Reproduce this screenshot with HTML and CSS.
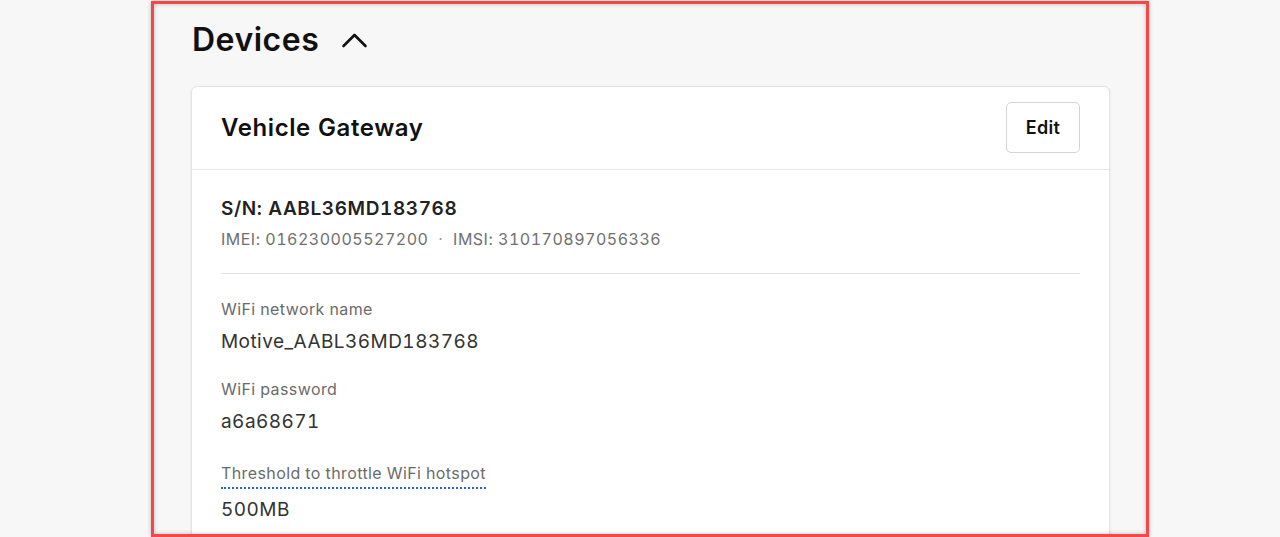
FILE: index.html
```html
<!DOCTYPE html>
<html lang="en">
<head>
<meta charset="utf-8">
<title>Devices</title>
<link rel="stylesheet" href="styles.css">
</head>
<body>
<div class="page">
  <div class="section-head">
    <h1 class="section-title">Devices</h1>
    <svg class="chevron" width="28" height="18" viewBox="0 0 28 18" aria-hidden="true">
      <polyline points="2.5,15 13.5,4 24.5,15" fill="none" stroke="#111" stroke-width="2.6" stroke-linecap="round" stroke-linejoin="round"/>
    </svg>
  </div>
  <div class="card">
    <div class="card-head">
      <h2 class="card-title">Vehicle Gateway</h2>
      <button class="btn">Edit</button>
    </div>
    <div class="card-body">
      <div class="serial">S/N: AABL36MD183768</div>
      <div class="ids">IMEI: 016230005527200 <span class="dot">·</span> IMSI: 310170897056336</div>
      <hr class="divider">
      <div class="field">
        <div class="label">WiFi network name</div>
        <div class="value">Motive_AABL36MD183768</div>
      </div>
      <div class="field">
        <div class="label">WiFi password</div>
        <div class="value">a6a68671</div>
      </div>
      <div class="field field-hint">
        <div class="label"><span class="hint">Threshold to throttle WiFi hotspot</span></div>
        <div class="value">500MB</div>
      </div>
    </div>
  </div>
</div>
<div class="highlight"></div>
</body>
</html>
```
FILE: styles.css
```css
* { box-sizing: border-box; }
html, body { margin: 0; padding: 0; }
body {
  background: #f7f7f7;
  font-family: Inter, "Noto Sans", "Liberation Sans", sans-serif;
  color: #111;
  height: 537px;
  overflow: hidden;
  font-feature-settings: "tnum" 1;
}
.page {
  padding: 20px 0 0 191px;
  width: 1110px;
}
.section-head {
  display: flex;
  align-items: center;
  gap: 22px;
  height: 40px;
  margin-bottom: 26px;
  padding-left: 1px;
}
.section-title {
  margin: 0;
  font-size: 32px;
  line-height: 40px;
  font-weight: 600;
  letter-spacing: 0.5px;
  color: #111;
}
.chevron { display: block; }
.card {
  background: #fff;
  border: 1px solid #e3e3e3;
  border-radius: 6px;
  box-shadow: 0 1px 3px rgba(0,0,0,0.08);
  width: 919px;
}
.card-head {
  display: flex;
  align-items: center;
  justify-content: space-between;
  padding: 15px 29px 16px 29px;
  border-bottom: 1px solid #e6e6e6;
}
.card-title {
  margin: 0;
  font-size: 24px;
  line-height: 32px;
  font-weight: 600;
  letter-spacing: 0.6px;
  color: #111;
}
.btn {
  width: 74px;
  height: 51px;
  border: 1px solid #d4d4d4;
  border-radius: 5px;
  background: #fff;
  font-family: inherit;
  font-size: 18px;
  font-weight: 600;
  letter-spacing: 0.3px;
  color: #111;
  padding: 0;
}
.card-body {
  padding: 25px 29px 20px 29px;
}
.serial {
  font-size: 19px;
  line-height: 28px;
  font-weight: 600;
  letter-spacing: 0.6px;
  color: #222;
}
.ids {
  margin-top: 4px;
  font-size: 16px;
  line-height: 24px;
  letter-spacing: 0.5px;
  color: #707070;
}
.dot { padding: 0 5px; color: #9a9a9a; }
.divider {
  border: 0;
  border-top: 1px solid #e3e3e3;
  margin: 22px 0 23px;
}
.field { padding-bottom: 21px; }
.field-hint { padding-top: 4px; }
.label {
  font-size: 16px;
  line-height: 24px;
  letter-spacing: 0.4px;
  color: #6b6b6b;
}
.hint {
  display: inline-block;
  line-height: 22px;
  border-bottom: 2px dotted #2a63d6;
  padding-bottom: 3px;
}
.value {
  margin-top: 7px;
  font-size: 19px;
  line-height: 28px;
  letter-spacing: 0.45px;
  color: #333;
}
.field-hint .value { margin-top: 7px; }
.highlight {
  position: absolute;
  left: 151px;
  top: 1px;
  width: 998px;
  height: 536px;
  border: 3px solid #f44848;
  box-shadow: 0 0 4px rgba(0,0,0,0.25), inset 0 0 4px rgba(0,0,0,0.25);
  pointer-events: none;
}
```
